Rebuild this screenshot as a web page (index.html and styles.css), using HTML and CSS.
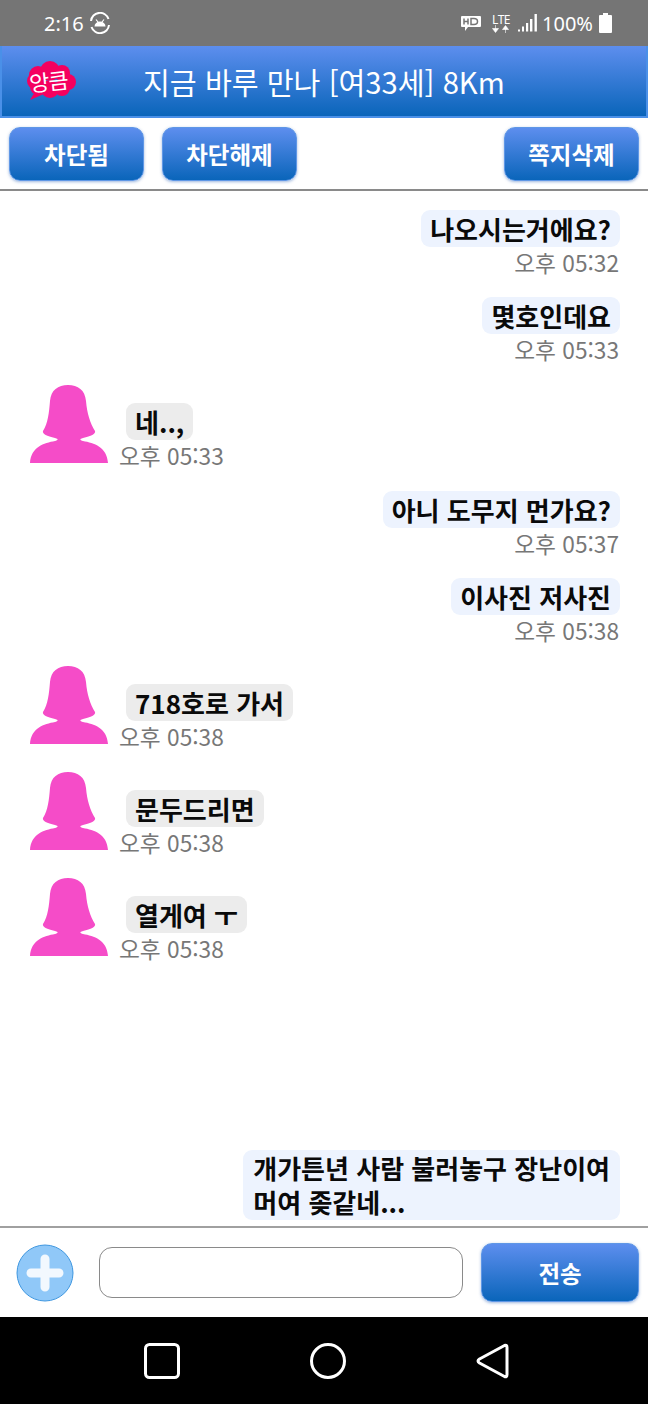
FILE: index.html
```html
<!DOCTYPE html>
<html lang="ko">
<head>
  <meta charset="UTF-8">
  <title>쪽지</title>
  <link rel="stylesheet" href="styles.css">
</head>
<body>

<svg class="defs" width="0" height="0">
  <symbol id="woman" viewBox="0 0 78 78">
    <path d="M38 0C28 0 21 5 20 16C19 28 18 38 13 46C12 49 17 51 25 53C29 54 28 55 25 56C14 58 1 62 0 78H78C77 62 64 58 53 56C50 55 49 54 53 53C61 51 66 49 65 46C60 38 57 28 56 16C55 5 48 0 38 0Z"/>
  </symbol>
</svg>

<div class="status-bar">
  <div class="status-left">
    <span>2:16</span>
    <svg class="sync-icon" viewBox="0 0 22 22" width="22" height="22">
      <path d="M2 9A9 9 0 0 1 19.500 7M20 13A9 9 0 0 1 2.500 15" fill="none" stroke="#fff" stroke-width="2"/>
      <path d="M5.500 14.500a5.500 5 0 0 1 11 0Z" fill="#fff"/>
      <path d="M7 7.500l2 2.500M15 7.500l-2 2.500" stroke="#fff" stroke-width="1.200"/>
    </svg>
  </div>
  <div class="status-right">
    <svg viewBox="0 0 22 18" width="22" height="18">
      <path d="M2 2H20Q21 2 21 3V12Q21 13 20 13H8L5 17V13H2Q1 13 1 12V3Q1 2 2 2Z" fill="#fff"/>
      <path d="M4 4.500V10.500M8 4.500V10.500M4 7.500H8" stroke="#757575" stroke-width="1.500"/>
      <path d="M11 4.500V10.500H14Q17.500 10.500 17.500 7.500T14 4.500Z" fill="none" stroke="#757575" stroke-width="1.500"/>
    </svg>
    <span class="lte">LTE<svg viewBox="0 0 20 8" width="20" height="8"><path d="M4.500 0V4M1.500 3.500H7.500L4.500 7.500ZM14.500 8V4M11.500 4.500H17.500L14.500 .5Z" fill="#fff" stroke="#fff" stroke-width=".6"/></svg></span>
    <svg class="signal" viewBox="0 0 20 18" width="20" height="18">
      <path d="M1 15.500h2v2H1ZM5 12.500h2v5H5ZM9 9h2.200v8.500H9ZM13 5h2.400v12.500H13ZM17.500 0h2.400v17.500h-2.400Z" fill="#fff"/>
    </svg>
    <span>100%</span>
    <svg viewBox="0 0 13 20" width="13" height="20">
      <path d="M4 0H9V2H12Q13 2 13 3V19Q13 20 12 20H1Q0 20 0 19V3Q0 2 1 2H4Z" fill="#fff"/>
    </svg>
  </div>
</div>

<header class="title-bar">
  <div class="logo">
    <svg viewBox="0 0 50 42" width="50" height="42">
      <g fill="#f5005f">
        <circle cx="12" cy="15" r="9"/>
        <circle cx="24" cy="11" r="10"/>
        <circle cx="36" cy="13" r="8"/>
        <circle cx="42" cy="22" r="8"/>
        <circle cx="36" cy="28" r="8"/>
        <circle cx="24" cy="29" r="9"/>
        <circle cx="12" cy="27" r="8"/>
        <circle cx="9" cy="21" r="8"/>
        <path d="M10 30L4 40L18 34Z"/>
      </g>
    </svg>
    <span class="logo-text">앙큼</span>
  </div>
  <h1 class="title">지금 바루 만나 [여33세] 8Km</h1>
</header>

<div class="action-bar">
  <button class="btn btn-action">차단됨</button>
  <button class="btn btn-action">차단해제</button>
  <button class="btn btn-action btn-right">쪽지삭제</button>
</div>

<main class="messages">
  <div class="msg msg-me">
    <div class="bubble">나오시는거에요?</div>
    <div class="time">오후 05:32</div>
  </div>
  <div class="msg msg-me">
    <div class="bubble">몇호인데요</div>
    <div class="time">오후 05:33</div>
  </div>
  <div class="msg msg-other">
    <svg class="avatar"><use href="#woman"/></svg>
    <div class="msg-body">
      <div class="bubble">네..,</div>
      <div class="time">오후 05:33</div>
    </div>
  </div>
  <div class="msg msg-me">
    <div class="bubble">아니 도무지 먼가요?</div>
    <div class="time">오후 05:37</div>
  </div>
  <div class="msg msg-me">
    <div class="bubble">이사진 저사진</div>
    <div class="time">오후 05:38</div>
  </div>
  <div class="msg msg-other">
    <svg class="avatar"><use href="#woman"/></svg>
    <div class="msg-body">
      <div class="bubble">718호로 가서</div>
      <div class="time">오후 05:38</div>
    </div>
  </div>
  <div class="msg msg-other">
    <svg class="avatar"><use href="#woman"/></svg>
    <div class="msg-body">
      <div class="bubble">문두드리면</div>
      <div class="time">오후 05:38</div>
    </div>
  </div>
  <div class="msg msg-other">
    <svg class="avatar"><use href="#woman"/></svg>
    <div class="msg-body">
      <div class="bubble">열게여 ㅜ</div>
      <div class="time">오후 05:38</div>
    </div>
  </div>
  <div class="msg msg-me msg-last">
    <div class="bubble">개가튼년 사람 불러놓구 장난이여<br>머여 좆같네...</div>
  </div>
</main>

<footer class="input-bar">
  <div class="plus-btn">
    <svg viewBox="0 0 58 58" width="58" height="58">
      <ellipse cx="29" cy="29" rx="28" ry="28" fill="#90c8f8" stroke="#3f97e0" stroke-width="1"/>
      <path d="M29 15V43M15 29H43" stroke="#f2f8fe" stroke-width="9" stroke-linecap="round"/>
    </svg>
  </div>
  <input class="text-input" type="text">
  <button class="btn btn-send">전송</button>
</footer>

<nav class="nav-bar">
  <svg viewBox="0 0 36 36" width="36" height="36"><rect x="1.500" y="1.500" width="33" height="33" rx="4" fill="none" stroke="#fff" stroke-width="3"/></svg>
  <svg viewBox="0 0 36 36" width="36" height="36"><circle cx="18" cy="18" r="16.500" fill="none" stroke="#fff" stroke-width="3"/></svg>
  <svg viewBox="0 0 33 36" width="33" height="36"><path d="M28.500 2.500Q31 1.500 31 4.500V31.500Q31 34.500 28.500 33.500L3.500 20Q0.500 18 3.500 16Z" fill="none" stroke="#fff" stroke-width="3" stroke-linejoin="round"/></svg>
</nav>

</body>
</html>
```

FILE: styles.css
```css
* {
  box-sizing: border-box;
}

html, body {
  height: 100%;
}

body {
  margin: 0;
  display: flex;
  flex-direction: column;
  overflow: hidden;
  background-color: #fff;
  font-family: "Noto Sans CJK KR", "Noto Sans", sans-serif;
}

.defs {
  position: absolute;
}

.status-bar {
  flex: 0 0 46px;
  display: flex;
  justify-content: space-between;
  align-items: center;
  padding: 0 36px 0 44px;
  background-color: #757575;
  color: #fff;
  font-family: "Noto Sans", sans-serif;
  font-size: 20px;
}

.status-left, .status-right {
  display: flex;
  align-items: center;
}

.status-left {
  gap: 5px;
}

.status-right {
  gap: 6px;
}

.lte {
  display: flex;
  flex-direction: column;
  align-items: center;
  margin-left: 3px;
  font-size: 12px;
  line-height: 11px;
  letter-spacing: -0.5px;
}

.signal {
  margin-left: 0;
  margin-right: -1px;
}

.title-bar {
  flex: 0 0 72px;
  display: flex;
  align-items: center;
  padding-left: 24px;
  background: linear-gradient(#5d8eee, #0a65ba);
  border-left: 2px solid #4a90e8;
  border-right: 2px solid #4a90e8;
  border-bottom: 2px solid #4a90e8;
}

.logo {
  position: relative;
  width: 50px;
  height: 42px;
}

.logo-text {
  position: absolute;
  left: 3px;
  top: 5px;
  color: #fff;
  font-size: 22px;
  font-weight: 400;
  line-height: 30px;
  letter-spacing: -1px;
  transform: rotate(-6deg);
}

.title {
  margin: 0 0 0 67px;
  color: #fff;
  font-size: 29.200px;
  font-weight: 400;
  white-space: nowrap;
}

.action-bar {
  flex: 0 0 73px;
  display: flex;
  gap: 18px;
  padding: 9px 9px 0;
  border-bottom: 2px solid #8a8a8a;
}

.btn {
  border: 1px solid #5f97e6;
  border-radius: 11px;
  background: linear-gradient(#5d8eee, #0a65ba);
  box-shadow: 0 1px 3px rgba(60, 110, 190, 0.5);
  color: #fff;
  font-family: inherit;
  font-size: 23.500px;
  font-weight: 700;
  padding: 0;
}

.btn-action {
  width: 135px;
  height: 54px;
}

.btn-right {
  margin-left: auto;
}

.messages {
  flex: 1;
  min-height: 0;
  display: flex;
  flex-direction: column;
  padding-top: 18.500px;
  padding-right: 28px;
}

.msg-me {
  display: flex;
  flex-direction: column;
  align-items: flex-end;
  height: 87.500px;
}

.msg-other {
  display: flex;
  align-items: flex-start;
  height: 106px;
  padding-left: 30px;
}

.avatar {
  width: 78px;
  height: 78px;
  fill: #f54cc8;
  flex: none;
}

.msg-body {
  display: flex;
  flex-direction: column;
  align-items: flex-start;
  margin-left: 18px;
  padding-top: 18px;
}

.bubble {
  padding: 0 9px;
  min-height: 37px;
  border-radius: 9px;
  color: #0a0a0a;
  font-size: 26px;
  font-weight: 700;
  line-height: 37px;
  white-space: nowrap;
}

.msg-me .bubble {
  background-color: #edf3fe;
}

.msg-other .bubble {
  background-color: #ececec;
}

.msg-me .time {
  margin-right: 1px;
}

.msg-other .time {
  margin-left: -7px;
}

.time {
  color: #777;
  font-size: 22.700px;
  line-height: 32px;
}

.msg-last {
  height: auto;
  margin-top: auto;
  margin-bottom: 6px;
}

.msg-last .bubble {
  line-height: 34px;
  padding: 1px 10px;
}

.input-bar {
  flex: 0 0 91px;
  display: flex;
  align-items: center;
  padding: 0 9px 0 16px;
  border-top: 2px solid #a0a0a0;
}

.plus-btn {
  width: 58px;
  height: 58px;
  flex: none;
}

.text-input {
  width: 364px;
  height: 51px;
  margin-left: 25px;
  border: 1px solid #8a8a8a;
  border-radius: 13px;
  background-color: #fff;
}

.btn-send {
  width: 158px;
  height: 59px;
  margin-left: 18px;
}

.nav-bar {
  flex: 0 0 87px;
  display: flex;
  align-items: center;
  justify-content: center;
  gap: 130px;
  padding-left: 5px;
  background-color: #000;
}
```
